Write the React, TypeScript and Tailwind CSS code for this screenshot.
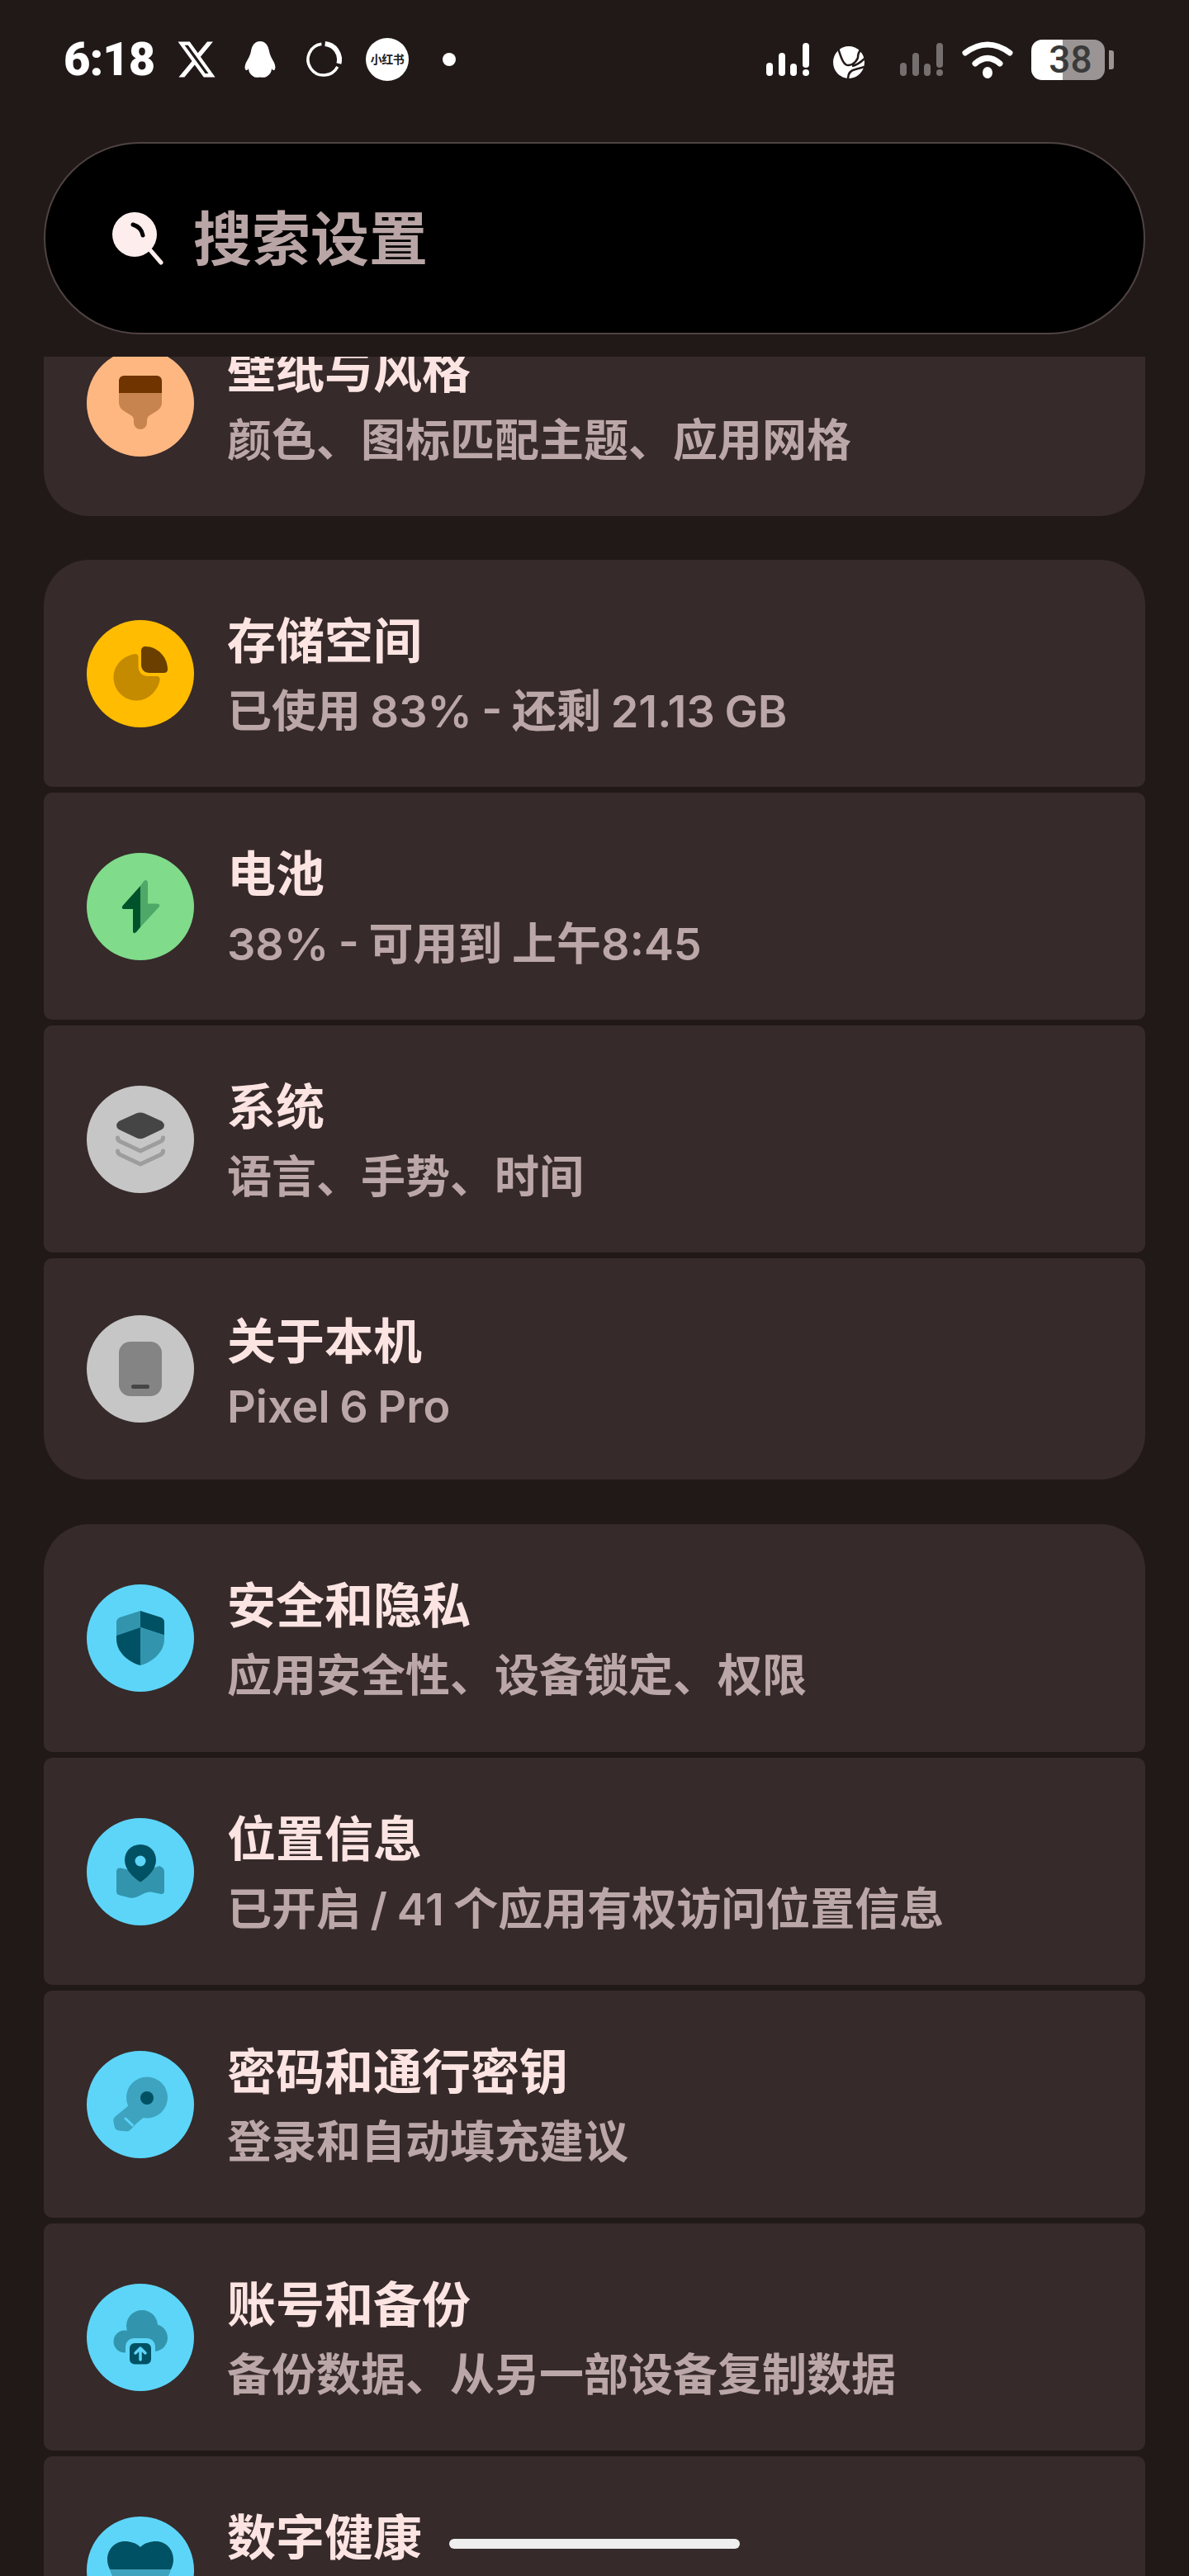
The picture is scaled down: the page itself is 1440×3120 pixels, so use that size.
import React from "react";

const BLUE_DARK = "#005163";
const BLUE_MID = "#3295ad";
const BLUE_LIGHT = "#3da3bf";
const BLUE_BG = "#5dd5f8";

function Signal({ fill }: { fill: string }) {
  return (
    <svg width="53" height="40" viewBox="0 0 53 40" fill={fill} className="shrink-0">
      <rect x="0" y="24" width="8" height="16" rx="4" />
      <rect x="15" y="12" width="8" height="28" rx="4" />
      <rect x="29" y="25" width="8" height="15" rx="4" />
      <rect x="44" y="0" width="8" height="30" rx="4" />
      <rect x="44" y="32" width="8" height="8" rx="4" />
    </svg>
  );
}

function StatusBar() {
  return (
    <div className="flex h-[144px] items-center justify-between pl-[77px] pr-[91px] text-white">
      <div className="flex items-center">
        <span className="w-[107px] text-[56px] font-black leading-none tracking-[-1px]">6:18</span>
        {/* X */}
        <svg width="46" height="44" viewBox="1 2 22 20" fill="white" className="ml-[31px]" preserveAspectRatio="none">
          <path d="M18.244 2.25h3.308l-7.227 8.26 8.502 11.24H16.17l-5.214-6.817L4.99 21.75H1.68l7.73-8.835L1.254 2.25H8.08l4.713 6.231zm-1.161 17.52h1.833L7.084 4.126H5.117z" />
        </svg>
        {/* penguin */}
        <svg width="38" height="44" viewBox="0 0 38 44" fill="white" className="ml-[35px]">
          <path d="M19 0C26 0 29 6 30 12C31 17 33 20 35 24C38 29 38 34 36 35C34 35.5 33 33 33 33C33 37 31 40 28 42C26 44 22 44 19 43.5C16 44 12 44 10 42C7 40 5 37 5 33C5 33 4 35.5 2 35C0 34 0 29 3 24C5 20 7 17 8 12C9 6 12 0 19 0Z" />
        </svg>
        {/* ring */}
        <svg width="44" height="44" viewBox="0 0 44 44" fill="none" stroke="white" className="ml-[36px]">
          <path d="M23.7 3.1A19 19 0 0 1 40.4 26.9" strokeWidth="6" />
          <path d="M38.8 30.9A19 19 0 1 1 19.4 3.2" strokeWidth="3.5" />
        </svg>
        <div className="ml-[29px] flex h-[52px] w-[52px] items-center justify-center rounded-full bg-white">
          <span className="text-[14px] font-bold leading-none tracking-[-0.5px] text-[#222]">小红书</span>
        </div>
        <div className="ml-[41px] h-[16px] w-[16px] rounded-full bg-white" />
      </div>
      <div className="flex items-center">
        <Signal fill="#ffffff" />
        {/* globe */}
        <svg width="38" height="39" viewBox="0 0 38 39" className="ml-[28px] mt-[7px]" fill="none">
          <ellipse cx="19" cy="19.5" rx="19" ry="19.5" fill="white" />
          <path d="M6 3C9 10 10 18 15 22C20 25 27 21 30 14C30 10 31 7 33 5M23 24C28 23 33 20 38 15" stroke="#211918" strokeWidth="2.5" />
          <path d="M18 39C18 32 22 29 27 28C31 27 35 26 38 25" stroke="#211918" strokeWidth="2.5" />
        </svg>
        <div className="ml-[43px]">
          <Signal fill="#756f6f" />
        </div>
        {/* wifi */}
        <svg width="62" height="45" viewBox="0 0 62 45" fill="none" stroke="white" strokeLinecap="round" className="ml-[22px]">
          <path d="M4 14Q31 -6 58 14" strokeWidth="7" />
          <path d="M16 27Q31 14 46 27" strokeWidth="7" />
          <ellipse cx="31" cy="38" rx="6" ry="7" fill="white" stroke="none" />
        </svg>
        {/* battery */}
        <div className="ml-[22px] flex h-[49px] w-[89px] items-center justify-center rounded-[13px] bg-[linear-gradient(90deg,#ffffff_38px,#9a9594_38px)]">
          <span className="ml-[6px] text-[46px] font-medium leading-none text-[#3a3a3a]">38</span>
        </div>
        <div className="ml-[5px] h-[23px] w-[6px] rounded-r-[3px] bg-[#9a9594]" />
      </div>
    </div>
  );
}

function SearchBar() {
  return (
    <div className="mx-[53px] mt-[28px] flex h-[233px] items-center rounded-full border-2 border-[#4f4342] bg-black pl-[81px]">
      <svg width="62" height="64" viewBox="0 0 62 64" fill="none">
        <circle cx="27" cy="27" r="27" fill="#fdeded" />
        <path d="M46 46L59 61" stroke="#fdeded" strokeWidth="5" strokeLinecap="round" />
        <path d="M25 15Q35 18 37 28" stroke="black" strokeWidth="5" strokeLinecap="round" />
      </svg>
      <span className="ml-[36px] mt-[3px] text-[71px] font-bold leading-none text-[#b9a5a5]">搜索设置</span>
    </div>
  );
}

function BrushIcon() {
  return (
    <svg width="130" height="130" viewBox="0 0 130 130">
      <path d="M39 53H91V64C91 70 88 73 83 76L78 79C75 80.5 73 82.500 73 86V89A8 8 0 0 1 57 89V86C57 82.500 55 80.500 52 79L47 76C42 73 39 70 39 64Z" fill="#c8844f" />
      <path d="M39 53V38A6 6 0 0 1 45 32H85A6 6 0 0 1 91 38V53Z" fill="#6f3400" />
    </svg>
  );
}

function StorageIcon() {
  return (
    <svg width="130" height="130" viewBox="0 0 130 130">
      <path d="M59 41C61 41 62.500 42.500 62.500 45V56C62.500 63 67 68 74 68H85C87.500 68 89 70 88.500 72.500C86.500 85.500 74.500 97.500 60.500 97.500C45 97.500 32.500 85 32.500 69.500C32.500 55 44 43 59 41Z" fill="#c48a00" />
      <path d="M71 32C86 32 98 45 98 60C98 62.500 96 64 93.500 64H76C70 64 66 60 66 54V37C66 34 68 32 71 32Z" fill="#6a3f00" />
    </svg>
  );
}

function BoltIcon() {
  return (
    <svg width="130" height="130" viewBox="0 0 130 130">
      <path d="M65 40L69 34.500Q73 31 74 36V61.500H85Q90 62 87.500 65.500L65 90Z" fill="#4ea868" />
      <path d="M65 40L44 63.500Q41 67.500 45 68H56V94Q56 99 60 96L65 90Z" fill="#00522b" />
    </svg>
  );
}

function LayersIcon() {
  return (
    <svg width="130" height="130" viewBox="0 0 130 130" fill="none">
      <path d="M60 33.500Q65 31.500 70 33.500L91 43Q97 48.500 91 53L70 63Q65 65.500 60 63L39 53Q33 48.500 39 43Z" fill="#454545" />
      <path d="M37.500 63C37.500 65 38.500 66.500 40.500 67.500L65 79L89.500 67.500C91.500 66.500 92.500 65 92.500 63" stroke="#9d9d9d" strokeWidth="5" strokeLinecap="round" />
      <path d="M37.500 79C37.500 81 38.500 82.500 40.500 83.500L65 95L89.500 83.500C91.500 82.500 92.500 81 92.500 79" stroke="#9d9d9d" strokeWidth="5" strokeLinecap="round" />
    </svg>
  );
}

function PhoneIcon() {
  return (
    <svg width="130" height="130" viewBox="0 0 130 130">
      <rect x="39" y="32" width="52" height="66" rx="14" fill="#848484" />
      <rect x="54" y="84" width="22" height="5" rx="2.500" fill="#454545" />
    </svg>
  );
}

function ShieldIcon() {
  return (
    <svg width="130" height="130" viewBox="0 0 130 130">
      <path d="M65 32L40 40Q36.500 41.500 36 45V62L65 52Z" fill={BLUE_MID} />
      <path d="M65 32L90 40Q93.500 41.500 94 45V61.500L65 52Z" fill={BLUE_DARK} />
      <path d="M36 62V66C36 82 50 94 65 98V52Z" fill={BLUE_DARK} />
      <path d="M65 52L94 61.500V66C94 82 80 94 65 98Z" fill={BLUE_MID} />
    </svg>
  );
}

function PinIcon() {
  return (
    <svg width="130" height="130" viewBox="0 0 130 130">
      <path d="M36 65Q36 60 41 60.500L65 66L88 58Q94 60 94 65V88Q94 92.500 90 92L78 89.500Q74 89 70 91L62 95Q57 97.500 52 96.500L40 93.500Q36 92.500 36 89Z" fill={BLUE_MID} />
      <path d="M65 32C54 32 46 40.500 46 51C46 62 56 72 65 77.500C74 72 84 62 84 51C84 40.500 76 32 65 32Z" fill={BLUE_DARK} />
      <circle cx="65" cy="52" r="6.500" fill={BLUE_BG} />
    </svg>
  );
}

function KeyIcon() {
  return (
    <svg width="130" height="130" viewBox="0 0 130 130" fill="none">
      <path d="M51 66L34 80Q32 82 32.500 86L33.500 91Q34.500 96 39 96.500L49 97.500Q52 97 54 94.500L60 88L72 78Z" fill={BLUE_LIGHT} />
      <circle cx="73" cy="56.500" r="25" fill={BLUE_LIGHT} />
      <path d="M47 82L55.500 90" stroke={BLUE_BG} strokeWidth="3" strokeLinecap="round" />
      <circle cx="73" cy="57" r="8" fill={BLUE_DARK} />
    </svg>
  );
}

function CloudIcon() {
  return (
    <svg width="130" height="130" viewBox="0 0 130 130" fill="none">
      <circle cx="67" cy="51" r="19" fill={BLUE_MID} />
      <circle cx="46" cy="70" r="13.500" fill={BLUE_MID} />
      <circle cx="81.500" cy="65.500" r="16.500" fill={BLUE_MID} />
      <rect x="46" y="58" width="36" height="25" fill={BLUE_MID} />
      <rect x="47" y="66" width="36" height="36" rx="10" fill={BLUE_BG} />
      <rect x="52" y="72" width="26" height="25.500" rx="6" fill={BLUE_DARK} />
      <path d="M65 92V79M59 84L65 78L71 84" stroke={BLUE_BG} strokeWidth="3.500" strokeLinecap="round" strokeLinejoin="round" />
    </svg>
  );
}

function HeartIcon() {
  return (
    <svg width="130" height="130" viewBox="0 0 130 130">
      <path d="M28 64H102C99 78 82 92 65 104C48 92 31 78 28 64Z" fill={BLUE_LIGHT} />
      <path d="M65 37C60 32 53 30 46 30C34 30 25 40 25 52C25 56 26 60 28 64H102C104 60 105 56 105 52C105 40 96 30 84 30C77 30 70 32 65 37Z" fill={BLUE_DARK} />
    </svg>
  );
}

type Row = {
  title: string;
  sub: string;
  bg: string;
  icon: React.ReactNode;
  height?: string;
  subLeading?: string;
};

const groups: { margin: string; rows: Row[] }[] = [
  {
    margin: "",
    rows: [{ title: "壁纸与风格", sub: "颜色、图标匹配主题、应用网格", bg: "bg-[#ffb781]", icon: <BrushIcon /> }],
  },
  {
    margin: "mt-[53px]",
    rows: [
      { title: "存储空间", sub: "已使用 83% - 还剩 21.13 GB", bg: "bg-[#ffbc00]", icon: <StorageIcon /> },
      { title: "电池", sub: "38% - 可用到 上午8:45", bg: "bg-[#80db8a]", icon: <BoltIcon /> },
      { title: "系统", sub: "语言、手势、时间", bg: "bg-[#c6c6c6]", icon: <LayersIcon /> },
      { title: "关于本机", sub: "Pixel 6 Pro", bg: "bg-[#c6c6c6]", icon: <PhoneIcon />, height: "h-[268px]", subLeading: "leading-[72px]" },
    ],
  },
  {
    margin: "mt-[54px]",
    rows: [
      { title: "安全和隐私", sub: "应用安全性、设备锁定、权限", bg: "bg-[#5dd5f8]", icon: <ShieldIcon />, height: "h-[276px]" },
      { title: "位置信息", sub: "已开启 / 41 个应用有权访问位置信息", bg: "bg-[#5dd5f8]", icon: <PinIcon /> },
      { title: "密码和通行密钥", sub: "登录和自动填充建议", bg: "bg-[#5dd5f8]", icon: <KeyIcon /> },
      { title: "账号和备份", sub: "备份数据、从另一部设备复制数据", bg: "bg-[#5dd5f8]", icon: <CloudIcon /> },
      // its second line is below the fold, only the spacing is kept
      { title: "数字健康", sub: "\u00a0", bg: "bg-[#5dd5f8]", icon: <HeartIcon /> },
    ],
  },
];

export default function App() {
  return (
    <div className="relative h-[3120px] w-[1440px] overflow-hidden bg-[#211918] font-['Roboto','Noto_Sans_CJK_SC',sans-serif]">
      <header className="h-[432px]">
        <StatusBar />
        <SearchBar />
      </header>

      {/* list scrolled under the search bar */}
      <div className="h-[2688px] overflow-hidden px-[53px]">
        <div className="-mt-[82px]">
          {groups.map((group, i) => (
            <section key={i} className={`flex flex-col gap-[7px] ${group.margin}`}>
              {group.rows.map((row) => (
                <div
                  key={row.title}
                  className={`flex shrink-0 items-center gap-[40px] rounded-[10px] bg-[#362a2a] pl-[52px] first:rounded-t-[55px] last:rounded-b-[55px] ${row.height ?? "h-[275px]"}`}
                >
                  <div className={`h-[130px] w-[130px] shrink-0 rounded-full ${row.bg}`}>{row.icon}</div>
                  <div className="flex flex-col pt-[8px]">
                    <span className="text-[59px] font-bold leading-[84px] text-[#fbe4e2]">{row.title}</span>
                    <span className={`font-['Inter','Noto_Sans_CJK_SC',sans-serif] text-[54px] font-semibold [word-spacing:-2px] text-[#bba7a7] ${row.subLeading ?? "leading-[84px]"}`}>{row.sub}</span>
                  </div>
                </div>
              ))}
            </section>
          ))}
        </div>
      </div>

      {/* gesture bar */}
      <div className="absolute bottom-[33px] left-[544px] h-[12px] w-[352px] rounded-full bg-[#eeeeee]" />
    </div>
  );
}
